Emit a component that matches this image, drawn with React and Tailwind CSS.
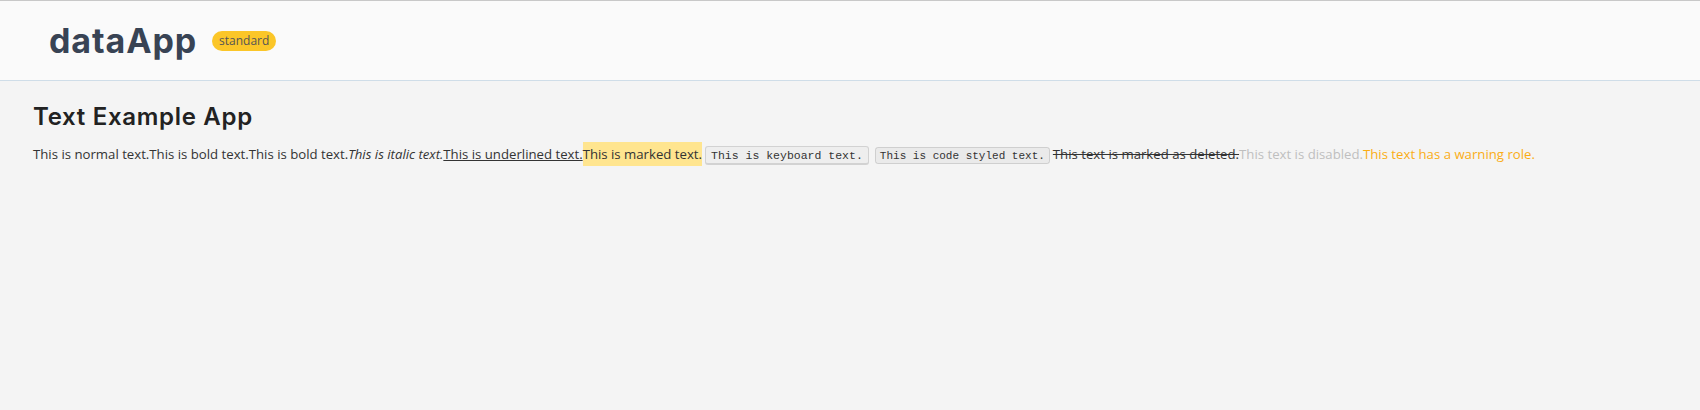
export default function App() {
    const body = { fontFamily: '"Open Sans", "Noto Sans", sans-serif' };
    return (
        <div className="min-h-[410px] bg-[#f4f4f4]" style={body}>
            <header className="flex h-[81px] items-center border-t border-b border-t-[#c8c8c8] border-b-[#cfdde8] bg-[#fafafa] pl-[49px]">
                <h1
                    className="text-[34px] font-bold leading-none tracking-[0.9px] text-[#384354]"
                    style={{ fontFamily: "Inter, sans-serif" }}
                >
                    dataApp
                </h1>
                <span className="ml-[15px] rounded-full bg-[#fbc628] px-[7px] py-[2px] text-[12px] leading-4 text-[#555]">
                    standard
                </span>
            </header>
            <main className="px-[33px] pt-[20px]">
                <h2
                    className="text-[24px] font-semibold leading-8 tracking-[0.7px] text-[#222]"
                    style={{ fontFamily: "Inter, sans-serif" }}
                >
                    Text Example App
                </h2>
                <p className="mt-[9px] text-[13.2px] leading-6 text-[#333]">
                    <span>This is normal text.</span>
                    <span>This is bold text.</span>
                    <span>This is bold text.</span>
                    <i>This is italic text.</i>
                    <u>This is underlined text.</u>
                    <mark className="bg-[#ffe58f] py-[3px] text-[#333]">This is marked text.</mark>
                    <kbd
                        className="mx-[3px] rounded-[3px] border border-b-2 border-[rgba(100,100,100,0.2)] bg-[rgba(150,150,150,0.06)] px-[5px] pt-[2px] pb-[1px] text-[11.5px]"
                        style={{ fontFamily: '"Liberation Mono", monospace' }}
                    >
                        This is keyboard text.
                    </kbd>
                    <code
                        className="mx-[3px] rounded-[3px] border border-[rgba(100,100,100,0.2)] bg-[rgba(150,150,150,0.1)] px-[4px] pt-[2px] pb-[1px] text-[11px]"
                        style={{ fontFamily: '"Liberation Mono", monospace' }}
                    >
                        This is code styled text.
                    </code>
                    <del>This text is marked as deleted.</del>
                    <span className="text-[#bfbfbf]">This text is disabled.</span>
                    <span className="text-[#faad14]">This text has a warning role.</span>
                </p>
            </main>
        </div>
    );
}
